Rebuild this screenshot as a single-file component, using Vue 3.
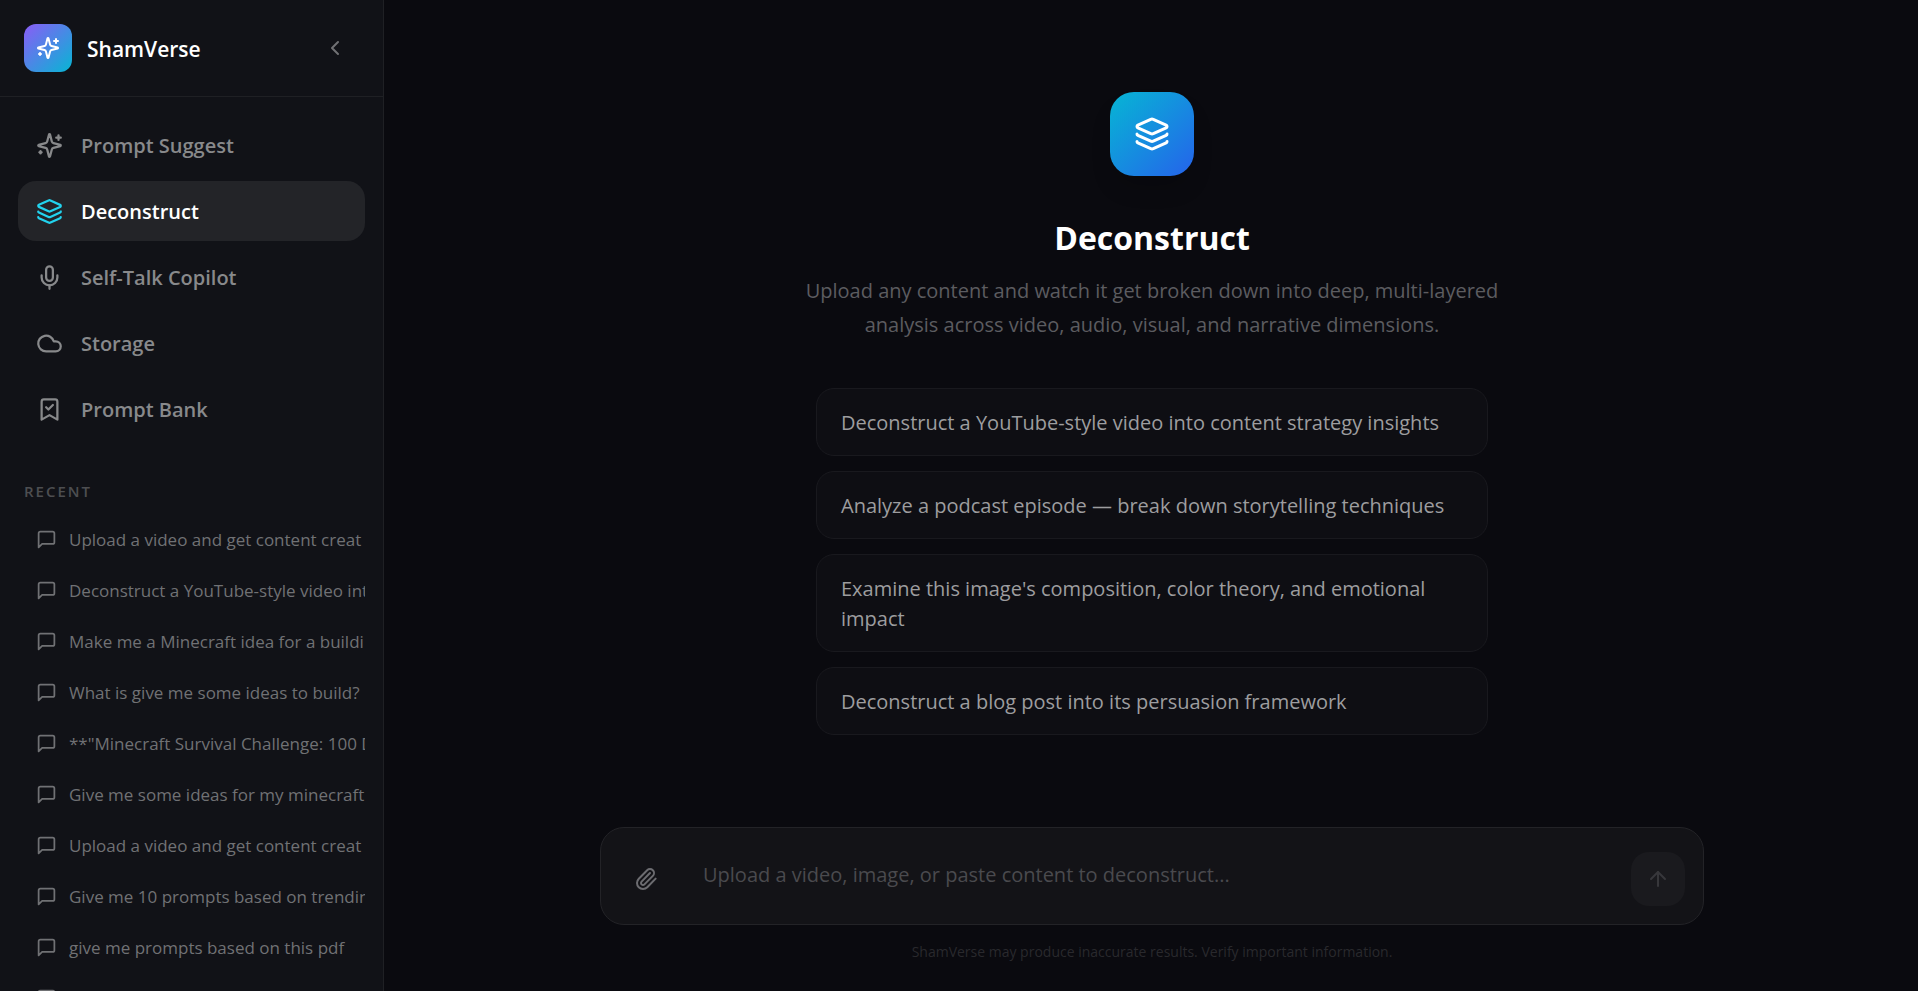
<template>
  <div class="app">
    <aside class="sidebar">
      <header class="brand">
        <div class="logo">
          <svg class="icon icon-md" viewBox="0 0 24 24" stroke-width="2">
            <path v-for="d in icons.sparkles" :key="d" :d="d" />
          </svg>
        </div>
        <span class="brand-name">ShamVerse</span>
        <button type="button" class="collapse" aria-label="Collapse sidebar">
          <svg class="icon icon-md" viewBox="0 0 24 24" stroke-width="2">
            <path d="m15 18-6-6 6-6" />
          </svg>
        </button>
      </header>

      <nav class="nav">
        <button
          v-for="item in navItems"
          :key="item.id"
          type="button"
          class="nav-item"
          :class="{ active: item.id === current }"
          @click="current = item.id"
        >
          <svg class="icon icon-lg" viewBox="0 0 24 24" stroke-width="2">
            <path v-for="d in icons[item.icon]" :key="d" :d="d" />
          </svg>
          <span class="nav-label">{{ item.label }}</span>
        </button>
      </nav>

      <section class="recent">
        <h2 class="recent-title">Recent</h2>
        <ul class="recent-list">
          <li v-for="(chat, i) in recent" :key="i">
            <button type="button" class="recent-item">
              <svg class="icon icon-sm" viewBox="0 0 24 24" stroke-width="2">
                <path v-for="d in icons.message" :key="d" :d="d" />
              </svg>
              <span class="recent-text">{{ chat }}</span>
            </button>
          </li>
        </ul>
      </section>
    </aside>

    <main class="main">
      <div class="hero">
        <div class="hero-icon">
          <svg class="icon icon-xl" viewBox="0 0 24 24" stroke-width="2">
            <path v-for="d in icons.layers" :key="d" :d="d" />
          </svg>
        </div>
        <h1 class="title">Deconstruct</h1>
        <p class="desc">
          Upload any content and watch it get broken down into deep, multi-layered analysis across
          video, audio, visual, and narrative dimensions.
        </p>
        <div class="suggestions">
          <button
            v-for="s in suggestions"
            :key="s"
            type="button"
            class="suggestion"
            @click="prompt = s"
          >
            {{ s }}
          </button>
        </div>
      </div>

      <form class="composer" @submit.prevent="send">
        <div class="composer-box">
          <button type="button" class="attach" aria-label="Attach file">
            <svg class="icon icon-md" viewBox="0 0 24 24" stroke-width="2">
              <path v-for="d in icons.paperclip" :key="d" :d="d" />
            </svg>
          </button>
          <textarea
            v-model="prompt"
            class="prompt"
            rows="1"
            aria-label="Message"
            placeholder="Upload a video, image, or paste content to deconstruct..."
          ></textarea>
          <button type="submit" class="send" aria-label="Send" :disabled="!prompt.trim()">
            <svg class="icon icon-md" viewBox="0 0 24 24" stroke-width="2">
              <path d="m5 12 7-7 7 7" />
              <path d="M12 19V5" />
            </svg>
          </button>
        </div>
        <p class="note">ShamVerse may produce inaccurate results. Verify important information.</p>
      </form>
    </main>
  </div>
</template>

<script setup>
import { ref } from 'vue';

const current = ref('deconstruct');
const prompt = ref('');

const icons = {
  sparkles: [
    'M9.937 15.5A2 2 0 0 0 8.5 14.063l-6.135-1.582a.5.5 0 0 1 0-.962L8.5 9.936A2 2 0 0 0 9.937 8.5l1.582-6.135a.5.5 0 0 1 .963 0L14.063 8.5A2 2 0 0 0 15.5 9.937l6.135 1.581a.5.5 0 0 1 0 .964L15.5 14.063a2 2 0 0 0-1.437 1.437l-1.582 6.135a.5.5 0 0 1-.963 0z',
    'M20 3v4',
    'M22 5h-4',
    'M4 17v2',
    'M5 18H3'
  ],
  layers: [
    'M12.83 2.18a2 2 0 0 0-1.66 0L2.6 6.08a1 1 0 0 0 0 1.83l8.58 3.91a2 2 0 0 0 1.66 0l8.58-3.9a1 1 0 0 0 0-1.83z',
    'M2 12a1 1 0 0 0 .58.91l8.6 3.91a2 2 0 0 0 1.65 0l8.58-3.9A1 1 0 0 0 22 12',
    'M2 17a1 1 0 0 0 .58.91l8.6 3.91a2 2 0 0 0 1.65 0l8.58-3.9A1 1 0 0 0 22 17'
  ],
  mic: [
    'M12 2a3 3 0 0 0-3 3v7a3 3 0 0 0 6 0V5a3 3 0 0 0-3-3Z',
    'M19 10v2a7 7 0 0 1-14 0v-2',
    'M12 19v3'
  ],
  cloud: ['M17.5 19H9a7 7 0 1 1 6.71-9h1.79a4.5 4.5 0 1 1 0 9Z'],
  bookmark: ['m19 21-7-4-7 4V5a2 2 0 0 1 2-2h10a2 2 0 0 1 2 2Z', 'm9 10 2 2 4-4'],
  message: ['M21 15a2 2 0 0 1-2 2H7l-4 4V5a2 2 0 0 1 2-2h14a2 2 0 0 1 2 2z'],
  paperclip: [
    'm16 6-8.414 8.586a2 2 0 0 0 2.829 2.829l8.414-8.586a4 4 0 1 0-5.657-5.657l-8.379 8.551a6 6 0 1 0 8.485 8.485l8.379-8.551'
  ]
};

const navItems = [
  { id: 'suggest', label: 'Prompt Suggest', icon: 'sparkles' },
  { id: 'deconstruct', label: 'Deconstruct', icon: 'layers' },
  { id: 'copilot', label: 'Self-Talk Copilot', icon: 'mic' },
  { id: 'storage', label: 'Storage', icon: 'cloud' },
  { id: 'bank', label: 'Prompt Bank', icon: 'bookmark' }
];

const recent = [
  'Upload a video and get content creat',
  'Deconstruct a YouTube-style video int',
  'Make me a Minecraft idea for a buildi',
  'What is give me some ideas to build?',
  '**"Minecraft Survival Challenge: 100 D',
  'Give me some ideas for my minecraft',
  'Upload a video and get content creat',
  'Give me 10 prompts based on trendin',
  'give me prompts based on this pdf',
  'Give me some ideas'
];

const suggestions = [
  'Deconstruct a YouTube-style video into content strategy insights',
  'Analyze a podcast episode — break down storytelling techniques',
  "Examine this image's composition, color theory, and emotional impact",
  'Deconstruct a blog post into its persuasion framework'
];

function send() {
  prompt.value = '';
}
</script>

<style>
body { background: #0a0a0f; }
</style>

<style scoped>
* { margin: 0; padding: 0; box-sizing: border-box; }
.app {
  display: flex;
  height: 100vh;
  overflow: hidden;
  background: #0a0a0f;
  color: #fff;
  font-family: 'Open Sans', 'Noto Sans', sans-serif;
  font-size: 20px;
}
button { font: inherit; color: inherit; background: none; border: none; cursor: pointer; }
.icon {
  display: block; flex-shrink: 0; fill: none; stroke: currentColor;
  stroke-linecap: round; stroke-linejoin: round;
}
.icon-sm { width: 21px; height: 21px; }
.icon-md { width: 24px; height: 24px; }
.icon-lg { width: 27px; height: 27px; }
.icon-xl { width: 36px; height: 36px; }

.sidebar {
  display: flex; flex-direction: column; flex-shrink: 0; width: 384px;
  overflow: hidden; background: #111217; border-right: 1px solid #1f2024;
}
.brand {
  display: flex; align-items: center; gap: 15px; flex-shrink: 0;
  padding: 24px; border-bottom: 1px solid #1f2024;
}
.logo {
  display: grid; place-items: center; width: 48px; height: 48px;
  border-radius: 12px; background: linear-gradient(135deg, #8b5cf6, #06b6d4);
}
.brand-name { flex: 1; padding-top: 2px; font-size: 21px; font-weight: 600; line-height: 36px; }
.collapse {
  display: grid; place-items: center; width: 48px; height: 48px;
  border-radius: 12px; color: #707174;
}

.nav { display: flex; flex-direction: column; gap: 6px; flex-shrink: 0; padding: 18px; }
.nav-item {
  display: flex; align-items: center; gap: 18px; padding: 15px 18px;
  border-radius: 18px; color: #88898b; font-weight: 600; text-align: left;
}
.nav-label { padding-top: 2px; line-height: 28px; }
.nav-item.active { background: #232428; color: #fff; }
.nav-item.active .icon { color: #22d3ee; }

.recent { padding: 22px 18px 0; }
.recent-title {
  padding: 0 6px; margin-bottom: 13px; color: #4d4e51; font-size: 15px;
  font-weight: 600; line-height: 24px; letter-spacing: 2px; text-transform: uppercase;
}
.recent-list { display: flex; flex-direction: column; gap: 3px; list-style: none; }
.recent-item {
  display: flex; align-items: center; gap: 12px; width: 100%; padding: 12px 0 12px 18px;
  overflow: hidden; color: #707174; font-size: 17px; line-height: 24px; text-align: left;
}
.recent-item .icon { margin-bottom: 2px; }
.recent-text { white-space: nowrap; }

.main { display: flex; flex: 1; flex-direction: column; min-width: 0; padding-left: 2px; }
.hero {
  display: flex; flex: 1; flex-direction: column; align-items: center;
  justify-content: center; padding: 0 24px;
}
.hero-icon {
  display: grid; place-items: center; width: 84px; height: 84px; margin-bottom: 38px;
  border-radius: 24px; background: linear-gradient(135deg, #06b6d4, #2563eb);
  box-shadow: 0 15px 23px -5px rgba(0, 0, 0, 0.2);
}
.title { margin-bottom: 12px; font-size: 32px; font-weight: 700; line-height: 48px; }
.desc {
  max-width: 720px; margin-bottom: 46px; color: #5c5c60; line-height: 34px; text-align: center;
}
.suggestions { display: flex; flex-direction: column; gap: 15px; width: 100%; max-width: 672px; }
.suggestion {
  padding: 19px 24px 17px; border: 1px solid #19191e; border-radius: 18px;
  background: #0e0e13; color: #9d9d9f; line-height: 30px; text-align: left;
}

.composer { width: 100%; max-width: 1152px; margin: 0 auto; padding: 0 24px 27px; }
.composer-box {
  display: flex; align-items: flex-end; gap: 12px; padding: 18px;
  border: 1px solid #232327; border-radius: 24px; background: #131317;
}
.attach, .send {
  display: grid; place-items: center; flex-shrink: 0; width: 54px; height: 54px;
  border-radius: 18px;
}
.attach { color: #6c6c70; }
.send { background: #1a1a1e; color: #37373b; }
.prompt {
  flex: 1; min-width: 0; height: 60px; padding: 11px 18px; border: none; outline: none;
  resize: none; background: transparent; color: #fff; font: inherit; line-height: 36px;
}
.prompt::placeholder { color: #4a4a4e; opacity: 1; }
.note { margin-top: 15px; color: #29292d; font-size: 14px; line-height: 24px; text-align: center; }
</style>
